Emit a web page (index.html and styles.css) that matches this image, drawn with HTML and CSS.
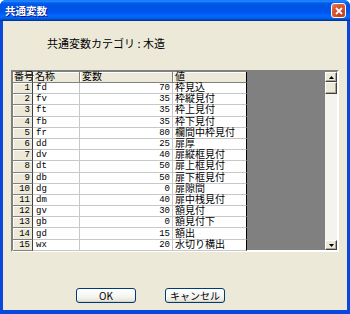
FILE: index.html
```html
<!DOCTYPE html>
<html>

<head>
	<meta charset="utf-8">
	<link rel="stylesheet" href="styles.css">
</head>

<body>
	<div class="window">
		<div class="titleBar">
			<span class="titleText">共通変数</span>
			<span class="closeButton">
				<svg width="8" height="8" viewBox="0 0 8 8">
					<path d="M1 1 L7 7 M7 1 L1 7" stroke="#fff" stroke-width="1.8" fill="none" />
				</svg>
			</span>
		</div>
		<div class="windowBody">
			<div class="categoryLabel">共通変数カテゴリ : 木造</div>
			<div class="grid">
				<table class="gridTable">
					<thead>
						<tr>
							<th class="rowHead">番号</th>
							<th class="colName">名称</th>
							<th class="colVar">変数</th>
							<th class="colValue">値</th>
						</tr>
					</thead>
					<tbody>
						<tr><td class="rowHead">1</td><td class="name">fd</td><td class="num">70</td><td class="value">枠見込</td></tr>
						<tr><td class="rowHead">2</td><td class="name">fv</td><td class="num">35</td><td class="value">枠縦見付</td></tr>
						<tr><td class="rowHead">3</td><td class="name">ft</td><td class="num">35</td><td class="value">枠上見付</td></tr>
						<tr><td class="rowHead">4</td><td class="name">fb</td><td class="num">35</td><td class="value">枠下見付</td></tr>
						<tr><td class="rowHead">5</td><td class="name">fr</td><td class="num">80</td><td class="value">欄間中枠見付</td></tr>
						<tr><td class="rowHead">6</td><td class="name">dd</td><td class="num">25</td><td class="value">扉厚</td></tr>
						<tr><td class="rowHead">7</td><td class="name">dv</td><td class="num">40</td><td class="value">扉縦框見付</td></tr>
						<tr><td class="rowHead">8</td><td class="name">dt</td><td class="num">50</td><td class="value">扉上框見付</td></tr>
						<tr><td class="rowHead">9</td><td class="name">db</td><td class="num">50</td><td class="value">扉下框見付</td></tr>
						<tr><td class="rowHead">10</td><td class="name">dg</td><td class="num">0</td><td class="value">扉隙間</td></tr>
						<tr><td class="rowHead">11</td><td class="name">dm</td><td class="num">40</td><td class="value">扉中桟見付</td></tr>
						<tr><td class="rowHead">12</td><td class="name">gv</td><td class="num">30</td><td class="value">額見付</td></tr>
						<tr><td class="rowHead">13</td><td class="name">gb</td><td class="num">0</td><td class="value">額見付下</td></tr>
						<tr><td class="rowHead">14</td><td class="name">gd</td><td class="num">15</td><td class="value">額出</td></tr>
						<tr><td class="rowHead">15</td><td class="name">wx</td><td class="num">20</td><td class="value">水切り横出</td></tr>
					</tbody>
				</table>
				<div class="emptyArea"></div>
				<div class="scrollBar">
					<div class="scrollButton">
						<svg width="5" height="3" viewBox="0 0 5 3"><path d="M0 3 L2.5 0 L5 3 Z" fill="#000" /></svg>
					</div>
					<div class="scrollThumb"></div>
					<div class="scrollTrack"></div>
					<div class="scrollButton">
						<svg width="5" height="3" viewBox="0 0 5 3"><path d="M0 0 L2.5 3 L5 0 Z" fill="#000" /></svg>
					</div>
				</div>
			</div>
			<div class="buttons">
				<button class="dlgButton">OK</button>
				<button class="dlgButton">キャンセル</button>
			</div>
		</div>
	</div>
</body>

</html>
```

FILE: styles.css
```css
html,
body {
	margin: 0;
	padding: 0;
	background: #fff;
}

body {
	font-family: "Noto Sans CJK JP", "DejaVu Sans", sans-serif;
	color: #000;
}

.window {
	width: 350px;
	height: 314px;
	display: flex;
	flex-direction: column;
	border-radius: 6px 6px 0 0;
	overflow: hidden;
	background: #0a47db;
}

.titleBar {
	height: 21px;
	display: flex;
	align-items: center;
	justify-content: space-between;
	padding: 0 4px 0 5px;
	background: linear-gradient(to bottom, #0058ee 0%, #3593ff 4%, #288eff 6%, #127dff 8%, #036ffc 10%, #0262ee 14%, #0057e5 20%, #0054e3 24%, #0055eb 56%, #005bf5 66%, #026afe 76%, #0062ef 86%, #0052d6 92%, #0040ab 94%, #003092 100%);
}

.titleText {
	color: #fff;
	font-size: 10.5px;
	font-weight: bold;
	text-shadow: 1px 1px #0f1089;
}

.closeButton {
	width: 13px;
	height: 13px;
	display: flex;
	align-items: center;
	justify-content: center;
	border: 1px solid #fff;
	border-radius: 3px;
	background: radial-gradient(circle at 70% 75%, #c23a18 0%, #d9532e 55%, #e9805f 100%);
}

.windowBody {
	flex: 1;
	margin: 0 3px 4px 3px;
	padding: 16px 8px 0 8px;
	background: #ece9d8;
	display: flex;
	flex-direction: column;
}

.categoryLabel {
	font-size: 11px;
	line-height: 12px;
	margin-left: 36px;
}

.grid {
	margin-top: 21px;
	height: 178px;
	display: flex;
	border-top: 2px solid #808080;
	border-left: 2px solid #808080;
	border-right: 2px solid #fff;
	border-bottom: 2px solid #fff;
	box-shadow: inset 1px 1px #404040;
}

.gridTable {
	width: 234px;
	table-layout: fixed;
	border-collapse: separate;
	border-spacing: 0;
	background: #fff;
	font-family: "Liberation Mono", "Noto Sans CJK JP", monospace;
	font-size: 9px;
}

.gridTable th,
.gridTable td {
	padding: 0 2px;
	line-height: 10px;
	white-space: nowrap;
}

.gridTable th,
.gridTable .value {
	font-family: "Liberation Sans", "Noto Sans CJK JP", sans-serif;
	font-size: 10px;
}

.gridTable th {
	height: 9px;
	font-weight: normal;
	text-align: left;
	background: #ece9d8;
	border-right: 1px solid #808080;
	border-bottom: 1px solid #808080;
	box-shadow: inset 1px 1px #fff;
}

.gridTable td {
	height: 10.2px;
	border-right: 1px solid #c8c8c8;
	border-bottom: 1px solid #c8c8c8;
}

.gridTable .rowHead {
	width: 17px;
	text-align: right;
	background: #ece9d8;
	border-right: 1px solid #404040;
	border-bottom: 1px solid #808080;
	box-shadow: inset 1px 1px #fff;
}

.gridTable th.rowHead {
	text-align: left;
	padding: 0 1px;
}

.gridTable .colName {
	width: 42px;
}

.gridTable .name {
	padding-left: 3px;
}

.gridTable .colVar {
	width: 88px;
}

.gridTable .colValue,
.gridTable .value {
	border-right: 1px solid #000;
}

.gridTable .num {
	text-align: right;
}

.emptyArea {
	flex: 1;
	background: #808080;
}

.scrollBar {
	width: 12px;
	display: flex;
	flex-direction: column;
	background: #f4f3ee;
}

.scrollButton,
.scrollThumb {
	background: #ece9d8;
	border-top: 1px solid #fff;
	border-left: 1px solid #fff;
	border-right: 1px solid #404040;
	border-bottom: 1px solid #404040;
	box-shadow: inset -1px -1px #aca899;
}

.scrollButton {
	height: 8px;
	display: flex;
	align-items: center;
	justify-content: center;
}

.scrollThumb {
	height: 10px;
}

.scrollTrack {
	flex: 1;
}

.buttons {
	display: flex;
	gap: 29px;
	margin-top: 36px;
	margin-left: 65px;
}

.dlgButton {
	width: 60px;
	height: 15px;
	padding: 0;
	font-family: "Noto Sans CJK JP", sans-serif;
	font-size: 10px;
	line-height: 12px;
	color: #000;
	border: 1px solid #003c74;
	border-radius: 3px;
	background: linear-gradient(to bottom, #ffffff 0%, #f4f4f0 60%, #e3e2da 100%);
	box-shadow: inset 0 -1px #d6d0c5, inset 1px 1px #fff;
}
```
